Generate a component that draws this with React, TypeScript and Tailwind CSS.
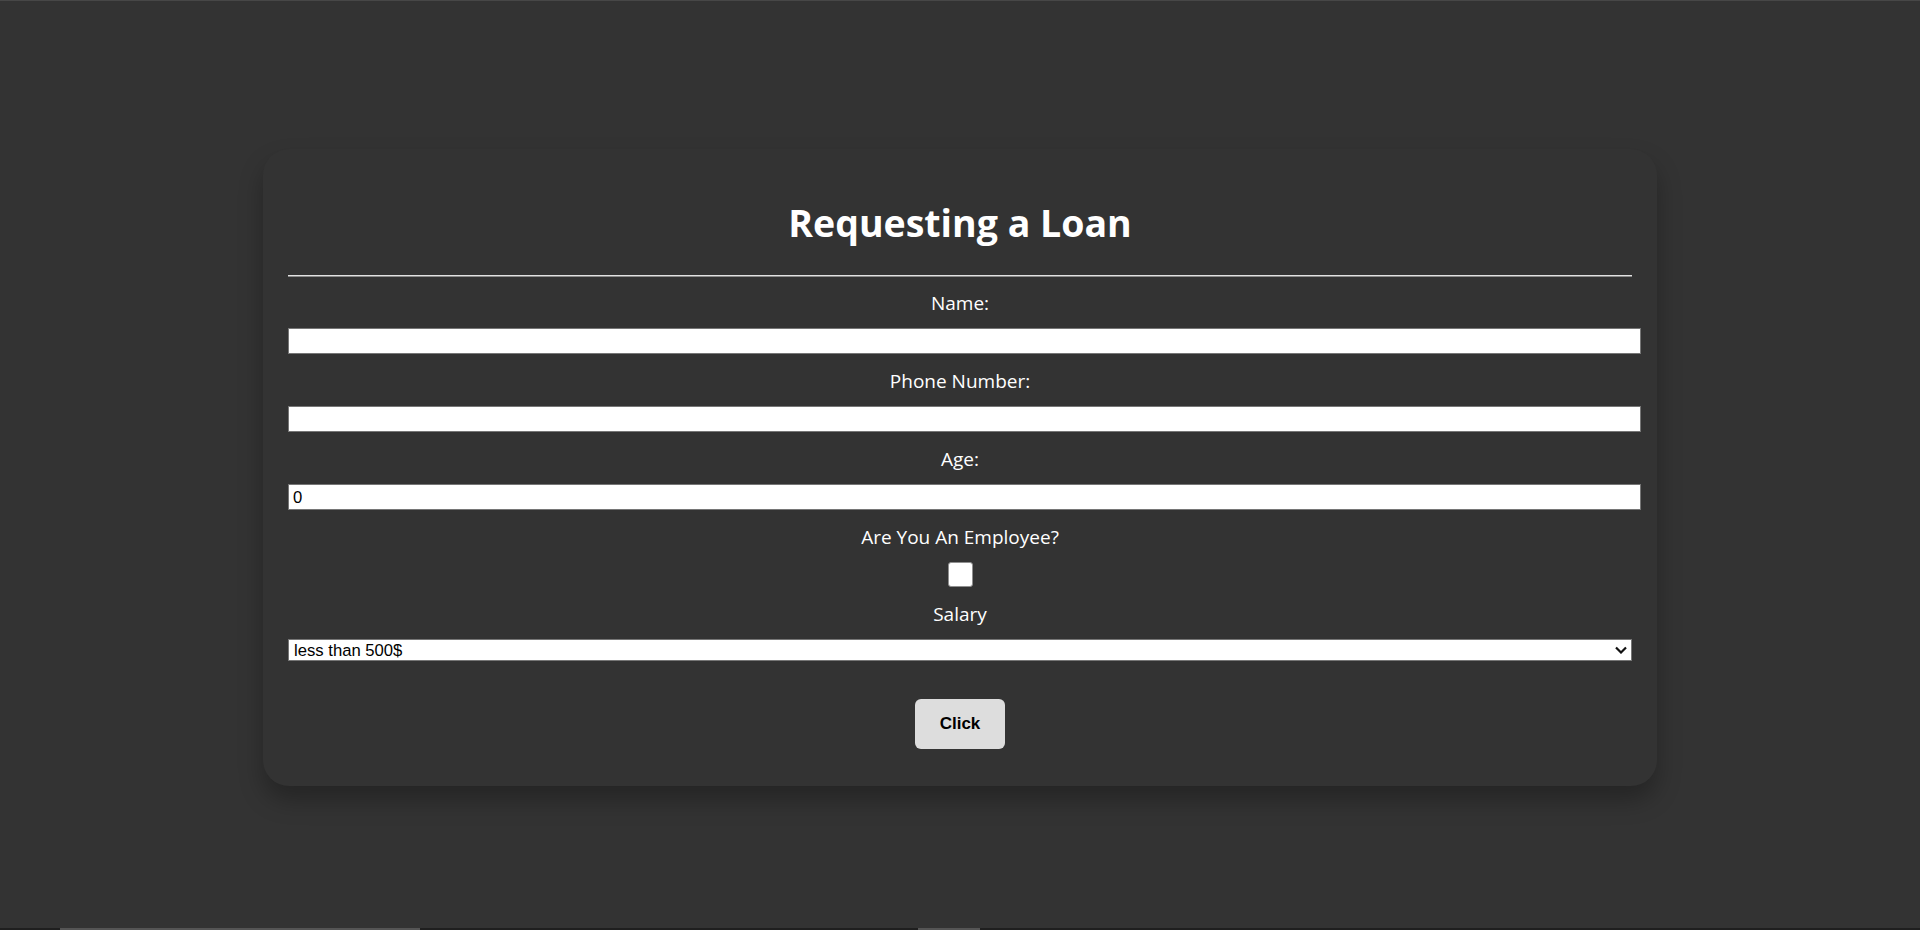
import { useState } from "react";

const SALARIES = ["less than 500$", "500$ - 1000$", "1000$ - 2000$", "more than 2000$"];

function Label({ children }: { children: React.ReactNode }) {
  return (
    <label className="block text-center text-white text-[19px] leading-[26px] mt-[14px] mb-[12px]">
      {children}
    </label>
  );
}

const inputCls =
  "block box-content w-full h-[24px] py-0 pl-[4px] pr-[3px] bg-white border border-[#767676] text-black text-[16.67px] font-['Liberation_Sans',Arial,sans-serif] outline-none";

export default function App() {
  const [name, setName] = useState("");
  const [phone, setPhone] = useState("");
  const [age, setAge] = useState("0");
  const [employee, setEmployee] = useState(false);
  const [salary, setSalary] = useState(SALARIES[0]);

  return (
    <div className="h-[930px] flex flex-col bg-[#333333] border-t border-[#474747] font-['Open_Sans',sans-serif] overflow-hidden">
      <main className="flex-1 pt-[148px]">
        {/* card */}
        <div className="mx-auto w-[1394px] bg-[#333333] rounded-[26px] px-[25px] pt-[25px] pb-[37px] shadow-[0_14px_24px_rgba(0,0,0,0.28)]">
          <h1 className="mt-[23px] text-center text-white font-bold text-[37.5px] leading-[52px]">
            Requesting a Loan
          </h1>
          <div className="mt-[26px] mb-[-1px] border-t border-[#e2e2e2] border-b border-b-[#8a8a8a]" />

          <Label>Name:</Label>
          <input className={inputCls} value={name} onChange={(e) => setName(e.target.value)} />

          <Label>Phone Number:</Label>
          <input className={inputCls} value={phone} onChange={(e) => setPhone(e.target.value)} />

          <Label>Age:</Label>
          <input
            type="number"
            className={inputCls}
            value={age}
            onChange={(e) => setAge(e.target.value)}
          />

          <Label>Are You An Employee?</Label>
          <div className="flex justify-center">
            <input
              type="checkbox"
              checked={employee}
              onChange={(e) => setEmployee(e.target.checked)}
              className="appearance-none w-[25px] h-[25px] bg-white border border-[#8f8f8f] rounded-[3px] checked:bg-[#1a73e8]"
            />
          </div>

          <Label>Salary</Label>
          <div className="relative">
            <select
              value={salary}
              onChange={(e) => setSalary(e.target.value)}
              className="block w-full h-[22px] appearance-none bg-white border border-[#767676] pl-[5px] pt-[1px] text-black text-[16.67px] leading-[19px] font-['Liberation_Sans',Arial,sans-serif] outline-none"
            >
              {SALARIES.map((s) => (
                <option key={s}>{s}</option>
              ))}
            </select>
            <svg
              className="absolute right-[5px] top-[7px] pointer-events-none"
              width="12"
              height="8"
              viewBox="0 0 12 8"
            >
              <path d="M1 1.5 L6 6.5 L11 1.5" fill="none" stroke="#111" strokeWidth="2.2" />
            </svg>
          </div>

          <div className="flex justify-center mt-[38px]">
            <button className="w-[90px] h-[50px] rounded-[6px] bg-[#dddddd] text-black font-bold text-[17px] font-['Liberation_Sans',Arial,sans-serif]">
              Click
            </button>
          </div>
        </div>
      </main>

      {/* bottom strip */}
      <div className="h-[2px] flex bg-[#1f1f1f]">
        <div className="ml-[60px] w-[360px] bg-[#555555]" />
        <div className="ml-[498px] w-[62px] bg-[#555555]" />
      </div>
    </div>
  );
}
